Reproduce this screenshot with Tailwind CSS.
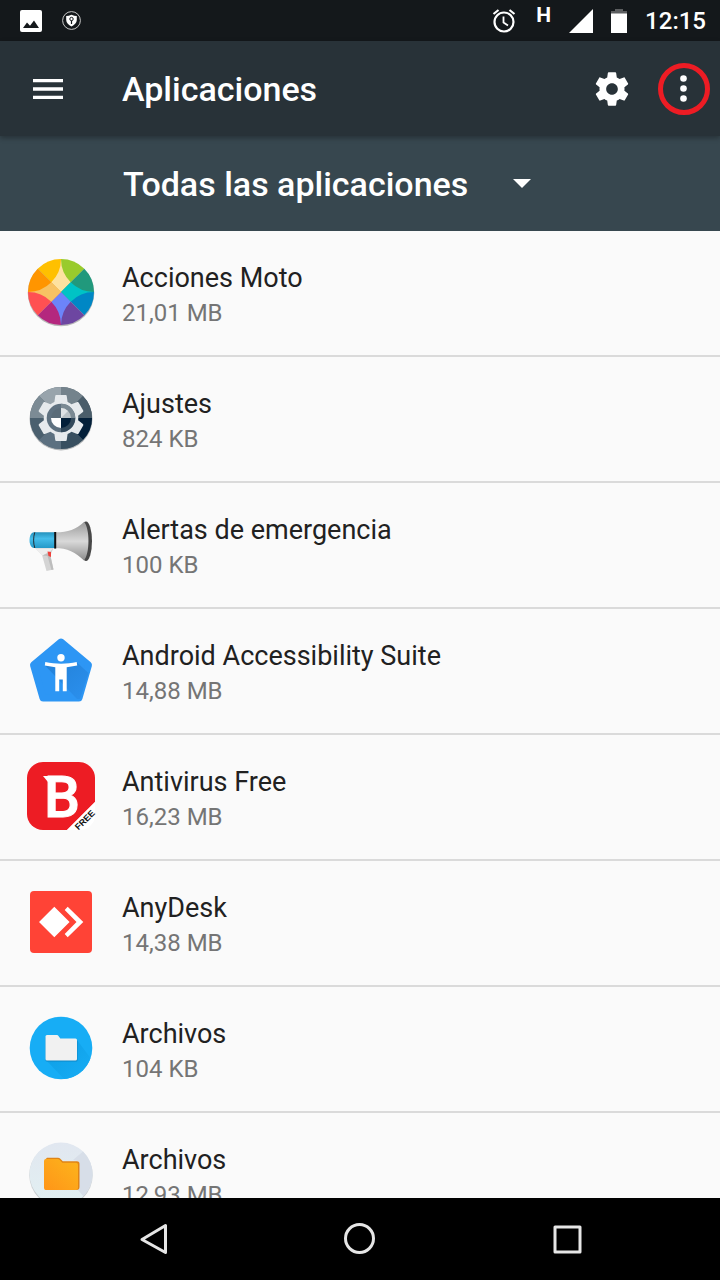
<!DOCTYPE html>
<html lang="es">

<head>
    <meta charset="UTF-8">
    <meta name="viewport" content="width=device-width, initial-scale=1.0">
    <title>Aplicaciones</title>
    <script src="https://cdn.jsdelivr.net/npm/@tailwindcss/browser@4"></script>
</head>

<body class="flex h-screen flex-col overflow-hidden bg-[#fafafa] font-['Roboto',sans-serif]">
    <!-- Status bar -->
    <div class="flex h-[41px] shrink-0 items-center justify-between bg-[#14181b] pr-[14px] pl-5 text-white">
        <div class="flex items-center gap-5">
            <svg class="size-[22px]" viewBox="0 0 22 22">
                <rect width="22" height="22" rx="2" fill="#fff" />
                <path d="M3 18l4-5.5 3 3.2 4-5.2L19 18z" fill="#14181b" />
            </svg>
            <svg class="size-[19px]" viewBox="0 0 19 19">
                <circle cx="9.5" cy="9.5" r="8.9" fill="none" stroke="#c8c8c8" stroke-width="1" />
                <path d="M9.5 3.8c1.8.9 3.6 1.3 5.3 1.3v3.900c0 2.800-2.500 5-5.300 6.500-2.800-1.500-5.300-3.700-5.300-6.500V5.100c1.700 0 3.500-.4 5.300-1.300z" fill="#fff" />
                <circle cx="9.5" cy="8" r="1.7" fill="none" stroke="#14181b" stroke-width="1" />
                <path d="M9.5 9.5v3.5" stroke="#14181b" stroke-width="1.2" />
            </svg>
        </div>
        <div class="flex items-center gap-[18px]">
            <svg class="h-6 w-7" viewBox="0 0 28 24" fill="none" stroke="#fff">
                <circle cx="14" cy="13" r="9.5" stroke-width="2.2" />
                <path d="M13.500 7.500v6l4.500 3" stroke-width="1.8" />
                <path d="M3.500 5L8.500 1M24.500 5L19.500 1" stroke-width="2.2" />
            </svg>
            <span class="-mt-3 text-[21px] leading-6 font-bold">H</span>
            <svg class="size-6" viewBox="0 0 24 24">
                <path d="M24 0v24H0z" fill="#fff" />
            </svg>
            <svg class="h-6 w-4" viewBox="0 0 16 24">
                <path d="M4 0h8v2h4v3H0V2h4z" fill="#5c5e60" />
                <path d="M0 4.500h16V24H0z" fill="#fff" />
            </svg>
            <span class="text-2xl leading-6 font-medium">12:15</span>
        </div>
    </div>

    <!-- App bar -->
    <header class="z-10 flex h-[95px] shrink-0 items-center bg-[#283238] pr-[10px] pl-6 text-white shadow-[0_2px_5px_rgba(0,0,0,0.3)]">
        <button type="button" aria-label="Menú" class="flex size-12 items-center justify-center">
            <svg class="h-5 w-[30px]" viewBox="0 0 30 20" fill="#fff">
                <path d="M0 0h30v3.300H0zM0 8.350h30v3.300H0zM0 16.700h30V20H0z" />
            </svg>
        </button>
        <h1 class="ml-[50px] flex-1 text-[34px] leading-10 font-medium">Aplicaciones</h1>
        <button type="button" aria-label="Ajustes" class="mr-[26px] flex size-10 items-center justify-center">
            <svg class="size-10" viewBox="0 0 24 24" fill="#fff">
                <path d="M19.430 12.980c.04-.32.07-.64.07-.98s-.03-.66-.07-.98l2.110-1.650c.19-.15.24-.42.12-.64l-2-3.460c-.12-.22-.39-.3-.61-.22l-2.490 1c-.52-.4-1.080-.73-1.690-.98l-.38-2.650C14.460 2.180 14.250 2 14 2h-4c-.25 0-.46.18-.49.42l-.38 2.650c-.61.25-1.170.59-1.690.98l-2.490-1c-.23-.09-.49 0-.61.22l-2 3.460c-.13.22-.07.49.12.64l2.110 1.650c-.04.32-.07.65-.07.98s.03.66.07.98l-2.110 1.650c-.19.15-.24.42-.12.64l2 3.460c.12.22.39.3.61.22l2.490-1c.52.4 1.080.73 1.690.98l.38 2.650c.03.24.24.42.49.42h4c.25 0 .46-.18.49-.42l.38-2.650c.61-.25 1.170-.59 1.690-.98l2.490 1c.23.09.49 0 .61-.22l2-3.460c.12-.22.07-.49-.12-.64l-2.110-1.650zM12 15.500c-1.930 0-3.500-1.570-3.500-3.500s1.570-3.500 3.500-3.500 3.500 1.570 3.500 3.500-1.570 3.500-3.500 3.500z" />
            </svg>
        </button>
        <button type="button" aria-label="Más opciones" class="relative flex size-[52px] items-center justify-center">
            <svg class="h-7 w-2" viewBox="0 0 8 28" fill="#fff">
                <circle cx="3.500" cy="3.500" r="3.300" />
                <circle cx="3.500" cy="13.500" r="3.300" />
                <circle cx="3.500" cy="23.500" r="3.300" />
            </svg>
            <span class="absolute inset-0 rounded-full border-[5px] border-[#ed1c24]"></span>
        </button>
    </header>

    <!-- Filter -->
    <div class="flex h-[95px] shrink-0 items-center bg-[#37474f] pl-[123px] text-white">
        <div class="relative">
            <select aria-label="Filtrar aplicaciones" class="appearance-none bg-transparent pr-16 text-[34px] leading-10 font-medium">
                <option>Todas las aplicaciones</option>
            </select>
            <svg class="pointer-events-none absolute top-[15px] right-0.5 h-[9px] w-[18px]" viewBox="0 0 18 9">
                <path d="M0 0h18L9 9z" fill="#fff" />
            </svg>
        </div>
    </div>

    <!-- App list -->
    <ul class="min-h-0 flex-1 divide-y-2 divide-[#dadada] overflow-hidden text-[#212121]">
        <li>
            <a href="#" class="flex gap-[25px] px-[25px] pt-[25px] pb-[27px]">
                <svg class="size-[72px] shrink-0" viewBox="0 0 72 72">
                    <circle cx="36" cy="37" r="33.300" fill="#b9b9b9" />
                    <path d="M36 36L12.700 12.700A33 33 0 0 1 36 3z" fill="#ffc000" />
                    <path d="M36 36V3a33 33 0 0 1 23.300 9.700z" fill="#99cb2c" />
                    <path d="M36 36L59.300 12.700A33 33 0 0 1 69 36z" fill="#21997c" />
                    <path d="M36 36h33a33 33 0 0 1-9.700 23.300z" fill="#0087c5" />
                    <path d="M36 36l23.300 23.300A33 33 0 0 1 36 69z" fill="#6d46a1" />
                    <path d="M36 36v33a33 33 0 0 1-23.300-9.700z" fill="#b4277e" />
                    <path d="M36 36L12.700 59.300A33 33 0 0 1 3 36z" fill="#ff5052" />
                    <path d="M36 36H3a33 33 0 0 1 9.700-23.300z" fill="#ff9500" />
                    <path d="M36 36l-9.700-9.700A33 33 0 0 0 36 3a33 33 0 0 0 9.700 23.300z" fill="#fee2a0" />
                    <path d="M36 36l9.700-9.700A33 33 0 0 0 69 36a33 33 0 0 0-23.300 9.700z" fill="#00c3c5" />
                    <path d="M36 36l9.700 9.700A33 33 0 0 0 36 69a33 33 0 0 0-9.700-23.300z" fill="#6c84f9" />
                    <path d="M36 36l-9.700 9.700A33 33 0 0 0 3 36a33 33 0 0 0 23.300-9.700z" fill="#f7c263" />
                </svg>
                <div class="pt-0.5">
                    <div class="text-[27px] leading-10">Acciones Moto</div>
                    <div class="text-2xl leading-[30px] text-[#757575]">21,01 MB</div>
                </div>
            </a>
        </li>
        <li>
            <a href="#" class="flex gap-[25px] px-[25px] pt-[25px] pb-[27px]">
                <svg class="size-[72px] shrink-0" viewBox="0 0 72 72">
                    <circle cx="36" cy="37" r="31.500" fill="#b5b8ba" />
                    <circle cx="36" cy="36" r="31" fill="#546672" />
                    <path d="M36 36L14 14A31 31 0 0 1 36 5z" fill="#98a4ac" />
                    <path d="M36 36V5a31 31 0 0 1 22 9z" fill="#74838c" />
                    <path d="M36 36L58 14a31 31 0 0 1 9 22z" fill="#4a5d6a" />
                    <path d="M36 36h31a31 31 0 0 1-9 22z" fill="#04203a" />
                    <path d="M36 36l22 22a31 31 0 0 1-22 9z" fill="#384f60" />
                    <path d="M36 36v31a31 31 0 0 1-22-9z" fill="#5c7080" />
                    <path d="M36 36L14 58A31 31 0 0 1 5 36z" fill="#4a5f6e" />
                    <path d="M36 36H5a31 31 0 0 1 9-22z" fill="#7c8b95" />
                    <path transform="translate(8.400 8.400) scale(2.300)" fill="#e6eaed" d="M19.430 12.980c.04-.32.07-.64.07-.98s-.03-.66-.07-.98l2.110-1.650c.19-.15.24-.42.12-.64l-2-3.460c-.12-.22-.39-.3-.61-.22l-2.490 1c-.52-.4-1.080-.73-1.690-.98l-.38-2.650C14.460 2.180 14.250 2 14 2h-4c-.25 0-.46.18-.49.42l-.38 2.650c-.61.25-1.170.59-1.690.98l-2.490-1c-.23-.09-.49 0-.61.22l-2 3.460c-.13.22-.07.49.12.64l2.110 1.650c-.04.32-.07.65-.07.98s.03.66.07.98l-2.110 1.650c-.19.15-.24.42-.12.64l2 3.460c.12.22.39.3.61.22l2.490-1c.52.4 1.080.73 1.690.98l.38 2.650c.03.24.24.42.49.42h4c.25 0 .46-.18.49-.42l.38-2.650c.61-.25 1.170-.59 1.690-.98l2.490 1c.23.09.49 0 .61-.22l2-3.460c.12-.22.07-.49-.12-.64l-2.110-1.650z" />
                    <circle cx="36" cy="36" r="14.300" fill="#5e7180" />
                    <path d="M36 36V21.700A14.300 14.300 0 0 1 50.300 36z" fill="#7a8993" />
                    <path d="M36 36h14.300A14.300 14.300 0 0 1 36 50.300z" fill="#32495b" />
                    <path d="M36 36v-10A10 10 0 0 1 46 36z" fill="#bac2c7" />
                    <path d="M36 36V26a10 10 0 0 1 7 3z" fill="#dfe3e6" />
                    <path d="M36 36h-10A10 10 0 0 1 36 26z" fill="#5a6c79" />
                    <path d="M36 36v10A10 10 0 0 1 26 36z" fill="#fff" />
                    <path d="M36 36h10A10 10 0 0 1 36 46z" fill="#04203a" />
                </svg>
                <div class="pt-0.5">
                    <div class="text-[27px] leading-10">Ajustes</div>
                    <div class="text-2xl leading-[30px] text-[#757575]">824 KB</div>
                </div>
            </a>
        </li>
        <li>
            <a href="#" class="flex gap-[25px] px-[25px] pt-[25px] pb-[27px]">
                <svg class="size-[72px] shrink-0" viewBox="0 0 72 72">
                    <defs>
                        <linearGradient id="horn" x1="0" y1="0" x2="0" y2="1">
                            <stop offset="0" stop-color="#9a9a9a" />
                            <stop offset=".5" stop-color="#d9d9d9" />
                            <stop offset="1" stop-color="#8c8c8c" />
                        </linearGradient>
                        <linearGradient id="barrel" x1="0" y1="0" x2="0" y2="1">
                            <stop offset="0" stop-color="#2592bd" />
                            <stop offset=".4" stop-color="#45bdea" />
                            <stop offset="1" stop-color="#2499c8" />
                        </linearGradient>
                    </defs>
                    <path d="M10 40h18.500l-2 4.500-1 3 3 14-7 1.500-4.500-16z" fill="#d4d4d4" />
                    <path d="M10 40.500h18l-2.500 2.500-8 4.500z" fill="#eee" />
                    <path d="M17.500 47.500l7-3 1 4 3 13-2 .5-4-14z" fill="#bdbdbd" />
                    <path d="M22.500 43.500l3.500.5v5l-2.500-1z" fill="#f0413c" />
                    <path d="M30 24.300v15.700H9c-6 0-6-15.700 0-15.700z" fill="url(#barrel)" />
                    <path d="M9.800 24.300c-1.600 5-1.600 10.700 0 15.700" fill="none" stroke="#222e33" stroke-width="1" />
                    <ellipse cx="61" cy="33.300" rx="6" ry="19.700" fill="#484848" />
                    <path d="M30 24.300c12 .2 21-2.500 29-10.300 6 6 6 32 0 38.500-8-8-17-12.500-29-12.500z" fill="url(#horn)" />
                    <path d="M29.200 24h2v16.600h-2z" fill="#111" />
                </svg>
                <div class="pt-0.5">
                    <div class="text-[27px] leading-10">Alertas de emergencia</div>
                    <div class="text-2xl leading-[30px] text-[#757575]">100 KB</div>
                </div>
            </a>
        </li>
        <li>
            <a href="#" class="flex gap-[25px] px-[25px] pt-[25px] pb-[27px]">
                <svg class="size-[72px] shrink-0" viewBox="0 0 72 72">
                    <defs>
                        <linearGradient id="shade" x1="0" y1="0" x2="1" y2="1">
                            <stop offset="0" stop-color="#2381d8" />
                            <stop offset="1" stop-color="#2b90ee" />
                        </linearGradient>
                    </defs>
                    <path d="M36 8L63.500 31 54 64H18L8.500 31z" fill="#2d96f4" stroke="#2d96f4" stroke-width="7" stroke-linejoin="round" />
                    <path d="M20 31.500L52 65h3l8.500-26L52 28.500z" fill="url(#shade)" />
                    <circle cx="36" cy="23.700" r="3.700" fill="#fff" />
                    <path d="M20.300 28c10.500 2.200 21 2.200 31.400 0l.5 3.600-10.500 1.700v24h-3.900V45.500h-3.600v11.800h-3.900v-24l-10.500-1.700z" fill="#fff" />
                </svg>
                <div class="pt-0.5">
                    <div class="text-[27px] leading-10">Android Accessibility Suite</div>
                    <div class="text-2xl leading-[30px] text-[#757575]">14,88 MB</div>
                </div>
            </a>
        </li>
        <li>
            <a href="#" class="flex gap-[25px] px-[25px] pt-[25px] pb-[27px]">
                <svg class="size-[72px] shrink-0" viewBox="0 0 72 72">
                    <path d="M18 2h36a16 16 0 0 1 16 16v24L42 70H18A16 16 0 0 1 2 54V18A16 16 0 0 1 18 2z" fill="#ed1c24" />
                    <path d="M70 42v13a15 15 0 0 1-15 15H42z" fill="#fff" />
                    <path d="M18 16h10v6h-5z" fill="#fff" />
                    <text x="19" y="57" font-family="Roboto, sans-serif" font-weight="500" font-size="57" fill="#fff" stroke="#fff" stroke-width="1">B</text>
                    <text x="60" y="63" transform="rotate(-45 60 60)" text-anchor="middle" font-family="Liberation Sans, sans-serif" font-weight="700" font-size="9" fill="#111">FREE</text>
                </svg>
                <div class="pt-0.5">
                    <div class="text-[27px] leading-10">Antivirus Free</div>
                    <div class="text-2xl leading-[30px] text-[#757575]">16,23 MB</div>
                </div>
            </a>
        </li>
        <li>
            <a href="#" class="flex gap-[25px] px-[25px] pt-[25px] pb-[27px]">
                <svg class="size-[72px] shrink-0" viewBox="0 0 72 72">
                    <rect x="5" y="5" width="62" height="62" rx="4" fill="#ff4336" />
                    <path d="M14 36l15.300-15.300L44.600 36 29.300 51.300zM42.700 20.700L58.300 36 42.700 51.300l-3-3.300L51.500 36 39.700 24z" fill="#fff" />
                </svg>
                <div class="pt-0.5">
                    <div class="text-[27px] leading-10">AnyDesk</div>
                    <div class="text-2xl leading-[30px] text-[#757575]">14,38 MB</div>
                </div>
            </a>
        </li>
        <li>
            <a href="#" class="flex gap-[25px] px-[25px] pt-[25px] pb-[27px]">
                <svg class="size-[72px] shrink-0" viewBox="0 0 72 72">
                    <defs>
                        <linearGradient id="cast" x1="0" y1="0" x2="1" y2="1">
                            <stop offset="0" stop-color="#0d9de4" />
                            <stop offset="1" stop-color="#17adf5" />
                        </linearGradient>
                    </defs>
                    <circle cx="36" cy="36" r="31.300" fill="#17adf5" />
                    <path d="M21 48l18 19A31.300 31.300 0 0 0 65.500 46L52 28z" fill="url(#cast)" />
                    <path d="M22 24h10l3.500 4H51a1.500 1.500 0 0 1 1.500 1.500V48a1.500 1.500 0 0 1-1.500 1.500H22a1.500 1.500 0 0 1-1.500-1.500V25.500z" fill="#0c86c6" />
                    <path d="M22 23h10a1.500 1.500 0 0 1 1.300.8L35.300 26.500H50.500a1.500 1.500 0 0 1 1.500 1.500V47a1.500 1.500 0 0 1-1.500 1.500H22a1.500 1.500 0 0 1-1.500-1.500V24.500A1.500 1.500 0 0 1 22 23z" fill="#f1f1f1" />
                </svg>
                <div class="pt-0.5">
                    <div class="text-[27px] leading-10">Archivos</div>
                    <div class="text-2xl leading-[30px] text-[#757575]">104 KB</div>
                </div>
            </a>
        </li>
        <li>
            <a href="#" class="flex gap-[25px] px-[25px] pt-[25px] pb-[27px]">
                <svg class="size-[72px] shrink-0" viewBox="0 0 72 72">
                    <defs>
                        <linearGradient id="folder" x1="0" y1="1" x2="1" y2="0">
                            <stop offset="0" stop-color="#ff9518" />
                            <stop offset="1" stop-color="#fcb51c" />
                        </linearGradient>
                        <linearGradient id="disc" x1="0" y1="1" x2="0" y2="0">
                            <stop offset="0" stop-color="#e2f0f2" />
                            <stop offset="1" stop-color="#e1e7f0" />
                        </linearGradient>
                    </defs>
                    <circle cx="36" cy="37" r="31.700" fill="#c9cdd0" />
                    <circle cx="36" cy="36" r="31.500" fill="url(#disc)" />
                    <path d="M58 13.500A31.500 31.500 0 0 1 58.300 58.300L53 52V23l-5-1z" fill="#d7dee8" />
                    <path d="M22 19.700h11c1 0 1.700.3 2.300 1l2.500 2.500H52a2.500 2.500 0 0 1 2.500 2.500V49a3 3 0 0 1-3 3H20.500V21.200z" fill="#e08416" />
                    <path d="M21 21h11.500c1 0 1.700.3 2.300 1l2.500 2.700H51a2 2 0 0 1 2 2V50a2 2 0 0 1-2 2H21a2 2 0 0 1-2-2V23a2 2 0 0 1 2-2z" fill="url(#folder)" />
                </svg>
                <div class="pt-0.5">
                    <div class="text-[27px] leading-10">Archivos</div>
                    <div class="text-2xl leading-[30px] text-[#757575]">12,93 MB</div>
                </div>
            </a>
        </li>
    </ul>

    <!-- Navigation bar -->
    <nav class="grid h-[82px] shrink-0 grid-cols-3 items-center bg-black px-[49px]">
        <button type="button" aria-label="Atrás" class="flex justify-center">
            <svg class="size-8" viewBox="0 0 32 32" fill="none" stroke="#e6e6e6" stroke-width="3" stroke-linejoin="round">
                <path d="M28.500 2.500v27L5 16.500z" />
            </svg>
        </button>
        <button type="button" aria-label="Inicio" class="flex justify-center">
            <svg class="size-8" viewBox="0 0 32 32" fill="none" stroke="#e6e6e6" stroke-width="3">
                <circle cx="15.500" cy="15.500" r="14" />
            </svg>
        </button>
        <button type="button" aria-label="Recientes" class="flex justify-center">
            <svg class="size-8" viewBox="0 0 32 32" fill="none" stroke="#e6e6e6" stroke-width="3" stroke-linejoin="round">
                <path d="M4 4h25v25H4z" />
            </svg>
        </button>
    </nav>
</body>

</html>
